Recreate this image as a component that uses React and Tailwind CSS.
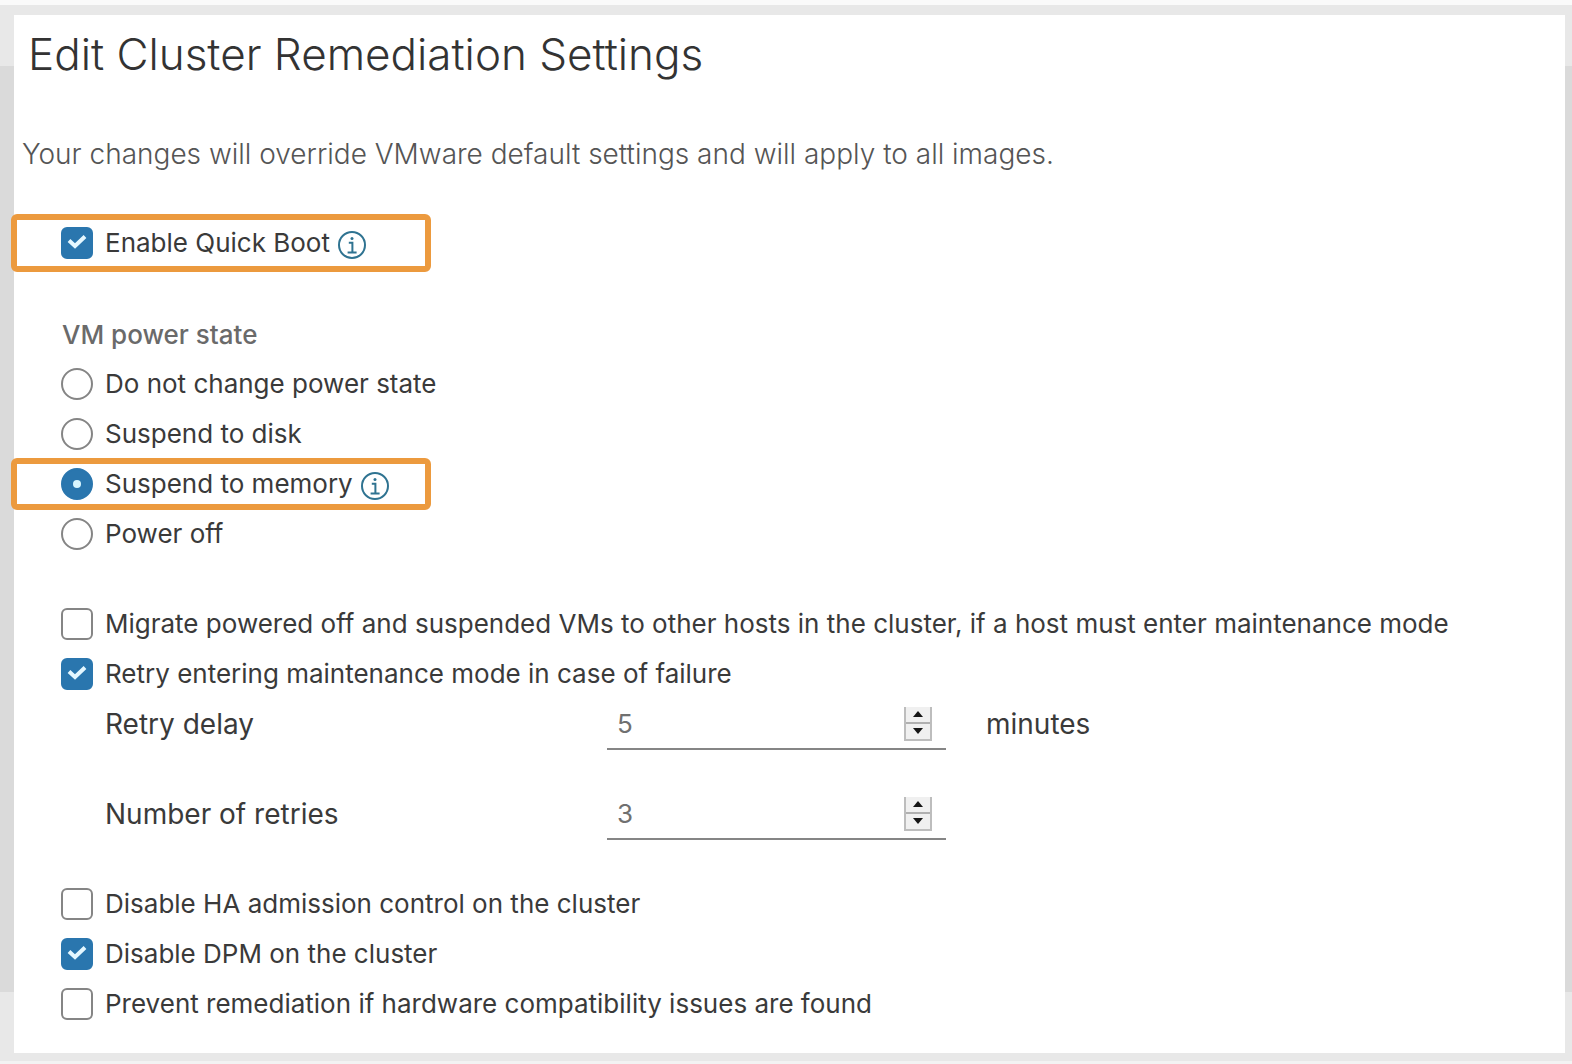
import { useState } from "react";

function InfoButton({ label }) {
  return (
    <button type="button" aria-label={label} className="mt-1 ml-2 shrink-0">
      <svg viewBox="0 0 28 28" className="size-7" fill="none" stroke="#2f7391" strokeWidth="2">
        <circle cx="14" cy="14" r="13" />
        <circle cx="14" cy="7.6" r="1.5" fill="#2f7391" stroke="none" />
        <path d="M10.8 11.8h3.6v9M9.6 21.4h9" />
      </svg>
    </button>
  );
}

function Highlight({ className }) {
  return (
    <div
      aria-hidden="true"
      className={`pointer-events-none absolute -left-[3px] w-[420px] rounded-md border-6 border-[#ec9a3e] ${className}`}
    />
  );
}

function CheckRow({ id, label, defaultChecked = false, children }) {
  return (
    <div className="relative flex min-h-[50px] items-center pl-[47px]">
      <span className="grid shrink-0 place-items-center">
        <input
          id={id}
          type="checkbox"
          defaultChecked={defaultChecked}
          className="peer col-start-1 row-start-1 size-8 appearance-none rounded-md border-2 border-[#858585] bg-white checked:border-[#2a76ae] checked:bg-[#2a76ae]"
        />
        <svg
          viewBox="0 0 20 16"
          className="pointer-events-none col-start-1 row-start-1 mb-0.5 hidden h-4 w-5 peer-checked:block"
          fill="none"
          stroke="#e4f7ff"
          strokeWidth="4"
        >
          <path d="M2 6.5l6 5.5L18 2.5" />
        </svg>
      </span>
      <label htmlFor={id} className="pl-3 text-[26px] leading-8">
        {label}
      </label>
      {children}
    </div>
  );
}

function RadioRow({ id, label, defaultChecked = false, children }) {
  return (
    <div className="relative flex min-h-[50px] items-center pl-[47px]">
      <span className="grid shrink-0 place-items-center">
        <input
          id={id}
          type="radio"
          name="power-state"
          defaultChecked={defaultChecked}
          className="peer col-start-1 row-start-1 size-8 appearance-none rounded-full border-2 border-[#858585] bg-white checked:border-[#2a76ae] checked:bg-[#2a76ae]"
        />
        <span className="pointer-events-none col-start-1 row-start-1 hidden size-2 rounded-full bg-[#d9f6ff] peer-checked:block" />
      </span>
      <label htmlFor={id} className="pl-3 text-[26px] leading-8">
        {label}
      </label>
      {children}
    </div>
  );
}

function NumberRow({ id, label, initial, unit }) {
  const [value, setValue] = useState(initial);
  return (
    <div className="flex h-[54px] items-start pl-[91px]">
      <label htmlFor={id} className="w-[502px] shrink-0 pt-[7px] text-[28px] leading-9">
        {label}
      </label>
      <div className="flex h-[51px] w-[339px] shrink-0 items-center border-b-2 border-[#858585] pr-3.5 pl-2.5">
        <input
          id={id}
          type="number"
          min="0"
          value={value}
          onChange={(e) => setValue(Number(e.target.value))}
          className="min-w-0 flex-1 appearance-none bg-transparent text-[26px] text-[#707070] outline-none [-moz-appearance:textfield] [&::-webkit-inner-spin-button]:appearance-none"
        />
        <div className="flex h-[34px] w-7 flex-col border-2 border-t-0 border-[#bdbdbd] bg-[#f0f0f0]">
          <button
            type="button"
            aria-label={`Increase ${label}`}
            onClick={() => setValue(value + 1)}
            className="flex flex-1 items-center justify-center border-b-2 border-[#b0b0b0]"
          >
            <svg viewBox="0 0 10 6" className="h-1.5 w-2.5" fill="#151515">
              <path d="M5 0l5 6H0z" />
            </svg>
          </button>
          <button
            type="button"
            aria-label={`Decrease ${label}`}
            onClick={() => setValue(Math.max(0, value - 1))}
            className="flex flex-1 items-center justify-center"
          >
            <svg viewBox="0 0 10 6" className="h-1.5 w-2.5" fill="#151515">
              <path d="M5 6L0 0h10z" />
            </svg>
          </button>
        </div>
      </div>
      {unit && <span className="pt-[7px] pl-10 text-[28px] leading-9">{unit}</span>}
    </div>
  );
}

export default function App() {
  return (
    <div className="min-h-screen bg-[linear-gradient(#fafafa_5px,#e8e8e8_5px,#e8e8e8_66px,#dadada_66px,#dadada_calc(100%_-_72px),#e8e8e8_calc(100%_-_72px),#e8e8e8_calc(100%_-_3px),#f3f3f3_calc(100%_-_3px))] pt-[15px] pr-[7px] pb-[11px] pl-3.5 font-['Inter',sans-serif] text-[#3a3a3a]">
      <main className="min-h-[1038px] bg-white pb-6">
        <h1 className="pt-2.5 pl-3.5 text-[44px] leading-[58px] font-light text-[#333]">
          Edit Cluster Remediation Settings
        </h1>
        <p className="pt-[53px] pl-2 text-[28px] leading-9 font-light text-[#555]">
          Your changes will override VMware default settings and will apply to all images.
        </p>

        <form>
          <div className="pt-[46px]">
            <CheckRow id="quick-boot" label="Enable Quick Boot" defaultChecked>
              <InfoButton label="About Quick Boot" />
              <Highlight className="-inset-y-1" />
            </CheckRow>
          </div>

          <fieldset className="pt-[51px]">
            <legend className="contents">
              <span className="block pb-2 pl-12 text-[26px] leading-8 font-medium text-[#6a6a6a]">
                VM power state
              </span>
            </legend>
            <RadioRow id="no-change" label="Do not change power state" />
            <RadioRow id="to-disk" label="Suspend to disk" />
            <RadioRow id="to-memory" label="Suspend to memory" defaultChecked>
              <InfoButton label="About suspend to memory" />
              <Highlight className="-inset-y-px" />
            </RadioRow>
            <RadioRow id="power-off" label="Power off" />
          </fieldset>

          <div className="pt-10">
            <CheckRow
              id="migrate"
              label="Migrate powered off and suspended VMs to other hosts in the cluster, if a host must enter maintenance mode"
            />
            <CheckRow
              id="retry"
              label="Retry entering maintenance mode in case of failure"
              defaultChecked
            />
            <div className="flex flex-col gap-9">
              <NumberRow id="retry-delay" label="Retry delay" initial={5} unit="minutes" />
              <NumberRow id="retry-count" label="Number of retries" initial={3} />
            </div>
          </div>

          <div className="pt-9">
            <CheckRow id="disable-ha" label="Disable HA admission control on the cluster" />
            <CheckRow id="disable-dpm" label="Disable DPM on the cluster" defaultChecked />
            <CheckRow
              id="prevent"
              label="Prevent remediation if hardware compatibility issues are found"
            />
          </div>
        </form>
      </main>
    </div>
  );
}
